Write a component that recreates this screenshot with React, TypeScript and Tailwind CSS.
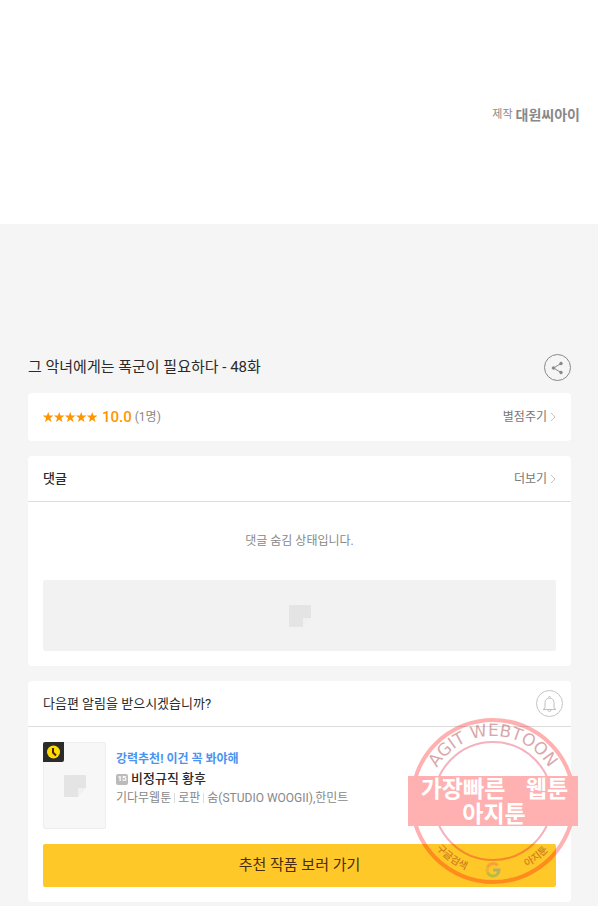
import React from "react";

function Chevron() {
  return (
    <svg width="6" height="10" viewBox="0 0 6 10" fill="none" stroke="#c4c4c4" aria-hidden="true">
      <path d="M1 1l4 4-4 4" />
    </svg>
  );
}

function Placeholder() {
  return (
    <svg width="22" height="22" viewBox="0 0 22 22" aria-hidden="true">
      <path d="M1 0h20a1 1 0 0 1 1 1v12h-7a1 1 0 0 0-1 1v8H1a1 1 0 0 1-1-1V1a1 1 0 0 1 1-1z" fill="#e4e4e4" />
      <path d="M22 13l-8 9v-8a1 1 0 0 1 1-1z" fill="#f0f0f0" />
    </svg>
  );
}

function Stars() {
  return (
    <svg width="54" height="10" viewBox="0 0 54 10" fill="#ff9500" role="img" aria-label="별점">
      {[0, 11, 22, 33, 44].map((x) => (
        <path
          key={x}
          transform={`translate(${x} 0)`}
          d="M5.2 0l1.300 3.500 4 .1-3.200 2.500 1.200 3.900-3.300-2.300L2 10l1.100-3.900L-.1 3.600l4-.1z"
        />
      ))}
    </svg>
  );
}

function Stamp() {
  return (
    <svg
      className="pointer-events-none absolute top-9 -right-[7px]"
      width="170"
      height="168"
      viewBox="0 0 170 168"
      aria-hidden="true"
    >
      <defs>
        <path id="arc-top" d="M20 84a65 65 0 0 1 130 0" />
        <path id="arc-bottom" d="M11 84a74 74 0 0 0 148 0" />
      </defs>
      <g opacity="0.3">
        <circle cx="85" cy="84" r="81" fill="none" stroke="#ff0000" strokeWidth="4" />
        <circle cx="85" cy="84" r="59" fill="none" stroke="#e00028" strokeWidth="2" />
      </g>
      <g opacity="0.42">
        <text fontSize="17" fill="#a83038" textAnchor="middle" className="font-['DejaVu_Sans',sans-serif]">
          <textPath href="#arc-top" startOffset="50%">AGIT WEBTOON</textPath>
        </text>
        <g fontSize="10" fontWeight="500" fill="#901010" textAnchor="middle" className="font-['Noto_Sans_CJK_KR',sans-serif]">
          <text><textPath href="#arc-bottom" startOffset="30%">구글검색</textPath></text>
          <text><textPath href="#arc-bottom" startOffset="71%">아지툰</textPath></text>
        </g>
      </g>
      <g fill="none" strokeWidth="3" opacity="0.4">
        <path d="M79.600 150.500a6 6 0 0 1 10-2" stroke="#ea6b50" />
        <path d="M79.600 150.500a6 6 0 0 0 0 5" stroke="#d0a030" />
        <path d="M79.600 155.500a6 6 0 0 0 9.500 2" stroke="#50a870" />
        <path d="M85 153h6a6 6 0 0 1-2 4.500" stroke="#5090c0" />
      </g>
      <path d="M0 59h170v50H0z" fill="#ffb0b0" />
      <g fill="#fff" fontSize="23" fontWeight="700" textAnchor="middle" className="font-['Noto_Sans_CJK_KR',sans-serif]">
        <text x="55" y="80">가장빠른</text>
        <text x="139" y="80">웹툰</text>
        <text x="86" y="105">아지툰</text>
      </g>
    </svg>
  );
}

export default function App() {
  return (
    <div className="min-h-screen bg-[#f5f5f5] font-['Roboto','Noto_Sans_CJK_KR',sans-serif] text-[#2a2a2a]">
      <header className="flex h-56 items-start justify-end bg-white pt-[103px] pr-[18px] text-[#888]">
        <p className="flex items-center gap-[3px] leading-6">
          <span className="text-[11px]">제작</span>
          <strong className="text-sm leading-6 font-bold">대원씨아이</strong>
        </p>
      </header>

      <main className="pt-[130px] pr-[27px] pb-1 pl-7">
        <div className="flex h-[27px] items-center justify-between">
          <h1 className="text-[15px]">그 악녀에게는 폭군이 필요하다 - 48화</h1>
          <button aria-label="공유" className="flex size-[27px] items-center justify-center rounded-full border border-[#888]">
            <svg width="13" height="14" viewBox="0 0 13 14" fill="#888" stroke="#888" aria-hidden="true">
              <path d="M10 2.500L2.500 7l7.500 4.500" fill="none" />
              <circle cx="10" cy="2.500" r="1.300" />
              <circle cx="2.500" cy="7" r="1.300" />
              <circle cx="10" cy="11.500" r="1.300" />
            </svg>
          </button>
        </div>

        <section className="mt-3 flex h-12 items-center justify-between rounded bg-white px-[15px]">
          <p className="flex items-center">
            <Stars />
            <span className="ml-[5px] text-[15px] font-medium text-[#ff9500]">10.0</span>
            <span className="ml-[3px] text-xs text-[#888]">(1명)</span>
          </p>
          <button className="flex items-center gap-[3px] text-xs text-[#777]">별점주기<Chevron /></button>
        </section>

        <section className="mt-[15px] rounded bg-white">
          <div className="flex h-[46px] items-center justify-between border-b border-[#ddd] px-[15px]">
            <h2 className="text-[13px] font-medium">댓글</h2>
            <button className="flex items-center gap-[3px] text-xs text-[#777]">더보기<Chevron /></button>
          </div>
          <p className="flex h-[78px] items-center justify-center text-xs text-[#888]">댓글 숨김 상태입니다.</p>
          <div className="px-[15px] pb-[15px]">
            <div className="flex h-[71px] items-center justify-center rounded-xs bg-[#f2f2f2]"><Placeholder /></div>
          </div>
        </section>

        <section className="relative mt-[15px] rounded bg-white">
          <div className="flex h-[46px] items-center justify-between border-b border-[#ddd] pr-2 pl-[15px]">
            <h2 className="text-[13px]">다음편 알림을 받으시겠습니까?</h2>
            <button aria-label="알림 받기" className="flex size-[27px] items-center justify-center rounded-full border border-[#c4c4c4]">
              <svg width="15" height="18" viewBox="0 0 15 18" fill="none" stroke="#c0c0c0" aria-hidden="true">
                <path d="M6.500 2.500a1 1 0 0 1 2 0M3 13V7.500a4.500 4.500 0 0 1 9 0V13l2 1.500H1L3 13zM6 15a1.500 1.500 0 0 0 3 0" />
              </svg>
            </button>
          </div>
          <div className="px-[15px] pt-[15px] pb-[15px]">
            <div className="flex gap-[10px]">
              <div className="relative flex h-[87px] w-[63px] shrink-0 items-center justify-center rounded-xs border border-[#eee] bg-[#f7f7f7]">
                <Placeholder />
                <svg className="absolute -top-px -left-px" width="21" height="20" viewBox="0 0 21 20" aria-hidden="true">
                  <path d="M2 0h19v18a2 2 0 0 1-2 2H0V2a2 2 0 0 1 2-2z" fill="#2b2b2b" />
                  <circle cx="10.500" cy="10" r="6.500" fill="#ffdc00" />
                  <path d="M10 6v4.500l3 3" fill="none" stroke="#4a2018" strokeWidth="2" />
                </svg>
              </div>
              <div className="pt-[7px]">
                <p className="text-xs leading-5 font-bold text-[#4b93f2]">강력추천! 이건 꼭 봐야해</p>
                <p className="flex items-center gap-[3px] text-[13px] leading-5 font-medium">
                  <span className="flex h-[11px] w-3 items-center justify-center rounded-xs bg-[#bbb] text-[8px] leading-none font-bold text-white">15</span>
                  비정규직 황후
                </p>
                <p className="flex items-center text-xs leading-[18px] text-[#888]">
                  기다무웹툰
                  <span className="mx-[3px] h-[10px] w-px bg-[#ddd]" />
                  로판
                  <span className="mx-[3px] h-[10px] w-px bg-[#ddd]" />
                  숨(STUDIO WOOGII),한민트
                </p>
              </div>
            </div>
            <button className="mt-[15px] h-[43px] w-full rounded-xs bg-[#ffc829] text-[15px] text-[#4a2c12]">추천 작품 보러 가기</button>
          </div>
          <Stamp />
        </section>
      </main>
    </div>
  );
}
